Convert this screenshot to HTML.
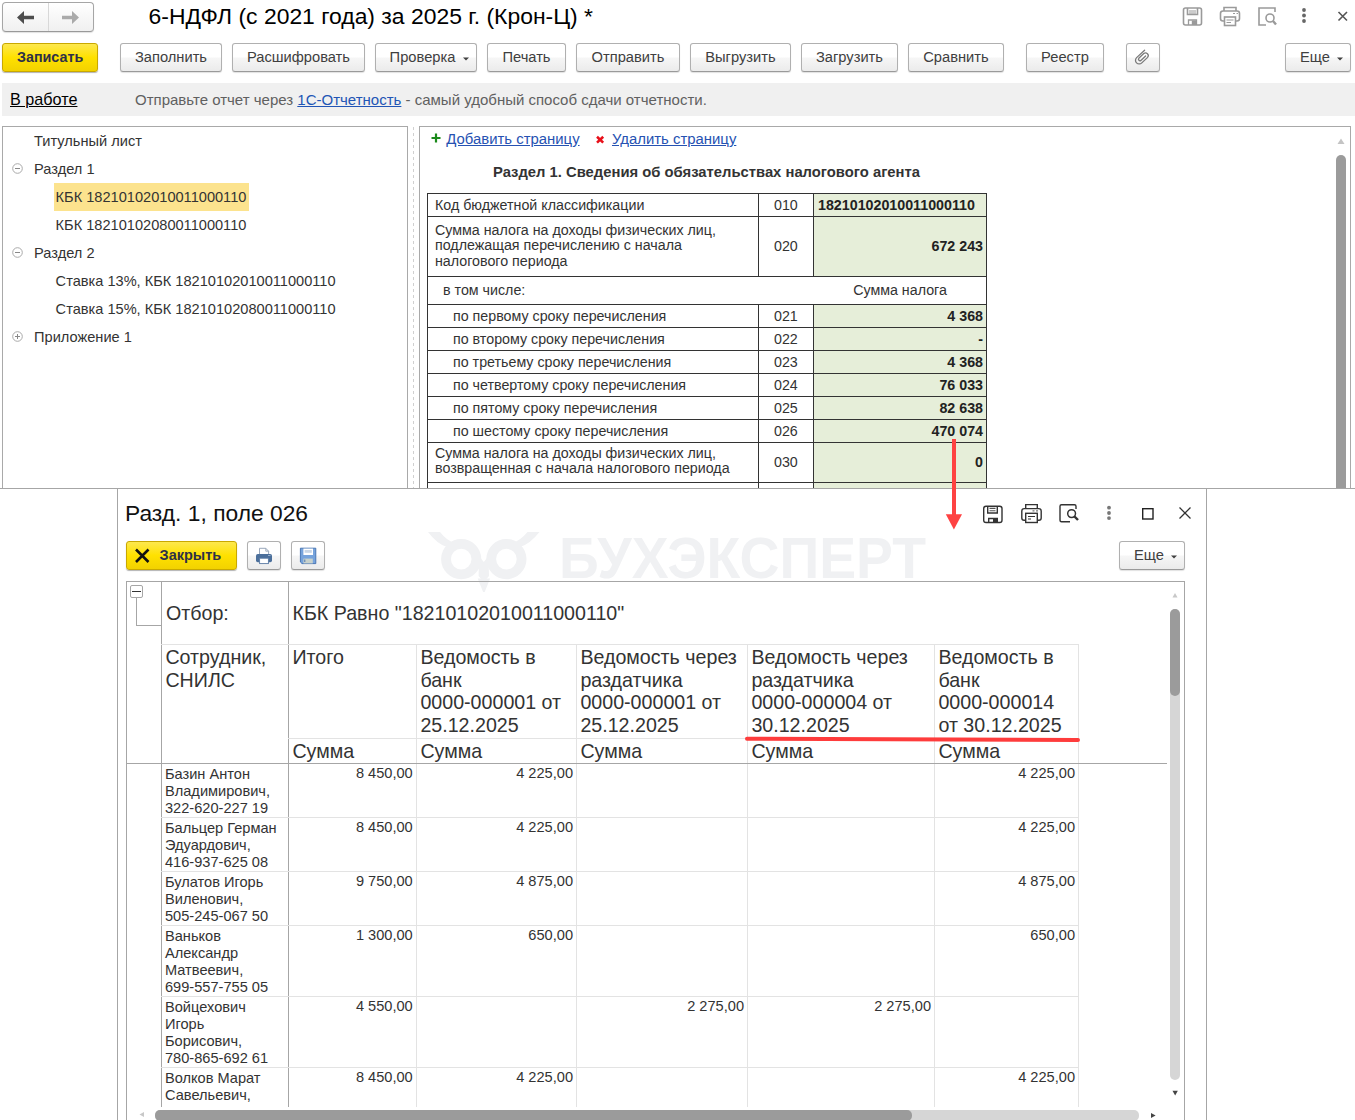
<!DOCTYPE html><html><head><meta charset="utf-8"><title>6-НДФЛ</title><style>
*{margin:0;padding:0;box-sizing:border-box}
html,body{width:1355px;height:1120px;overflow:hidden;background:#fff;font-family:"Liberation Sans",sans-serif;}
.a,.t{position:absolute}
.t{white-space:pre}
.btn{position:absolute;border:1px solid #b0b0b0;border-bottom-color:#9a9a9a;border-radius:3px;background:linear-gradient(#ffffff 48%,#f6f6f6 52%,#ebebeb);box-shadow:0 1px 1px rgba(0,0,0,.12);}
.ybtn{position:absolute;border:1px solid #c9a800;border-radius:3px;background:linear-gradient(#fde84e,#ffe100 50%,#f2d200);box-shadow:0 1px 1px rgba(0,0,0,.3);}
.u{text-decoration:underline;}
</style></head><body>
<div class="btn" style="left:2px;top:2px;width:92px;height:30px;border-radius:4px;border-color:#a6a6a6;border-bottom-color:#999;background:linear-gradient(#fff,#f0f0f0)"></div>
<div class="a" style="left:48px;top:3px;width:1px;height:28px;background:#d8d8d8"></div>
<svg class="a" style="left:0;top:0" width="100" height="36"><path d="M17 17.5 L24 11 V15.8 H34 V19.2 H24 V24 Z" fill="#4d4d4d"/><path d="M79 17.5 L72 11 V15.8 H62 V19.2 H72 V24 Z" fill="#aaaaaa"/></svg>
<div class="t " style="left:148.60px;top:2.63px;font-size:22.9px;line-height:27.479999999999997px;color:#000;font-weight:normal;">6-НДФЛ (с 2021 года) за 2025 г. (Крон-Ц) *</div>
<svg class="a" style="left:1175px;top:0" width="180" height="36" fill="none" stroke="#9a9a9a" stroke-width="1.6">
<rect x="8.5" y="8" width="18" height="17" rx="2"/>
<path d="M12.5 8 V14.5 H22.5 V8" /><path d="M14 11 H21 M14 13 H21" stroke-width="1"/>
<path d="M13.5 25 V20 H21.5 V25" stroke-width="1.3"/><rect x="16.8" y="20.5" width="4.5" height="4.5" fill="#9a9a9a" stroke="none"/>
<path d="M49 11 V7.5 H61 V11" /><rect x="45.5" y="11" width="19" height="10" rx="2.5"/><rect x="49.5" y="17" width="11" height="8.5" fill="#fff"/><path d="M51.5 20 H58.5 M51.5 22.5 H56" stroke-width="1"/><path d="M58 13.5 H60 M61.5 13.5 H63" stroke-width="1"/>
<path d="M91 25 H84 V8 H100 V12"/><circle cx="95" cy="18" r="4"/><path d="M98 21 L101 24.5" stroke-width="2.4"/>
<circle cx="129" cy="10" r="1.9" fill="#666" stroke="none"/><circle cx="129" cy="15.5" r="1.9" fill="#666" stroke="none"/><circle cx="129" cy="21" r="1.9" fill="#666" stroke="none"/>
<path d="M163.5 12 L172 20.5 M172 12 L163.5 20.5" stroke="#555" stroke-width="1.6"/>
</svg>
<div class="ybtn" style="left:2px;top:43px;width:96px;height:29px;"></div>
<div class="t " style="left:17.00px;top:48.97px;font-size:14.3px;line-height:17.16px;color:#2e3048;font-weight:bold;">Записать</div>
<div class="btn" style="left:120px;top:43px;width:102px;height:29px;"></div>
<div class="t " style="left:134.92px;top:49.19px;font-size:14.7px;line-height:17.639999999999997px;color:#404040;font-weight:normal;">Заполнить</div>
<div class="btn" style="left:232px;top:43px;width:133px;height:29px;"></div>
<div class="t " style="left:246.91px;top:49.19px;font-size:14.7px;line-height:17.639999999999997px;color:#404040;font-weight:normal;">Расшифровать</div>
<div class="btn" style="left:375px;top:43px;width:102px;height:29px;"></div>
<div class="t " style="left:389.60px;top:49.19px;font-size:14.7px;line-height:17.639999999999997px;color:#404040;font-weight:normal;">Проверка</div>
<svg class="a" style="left:463px;top:57px" width="6" height="4"><path d="M0 0.5 H6 L3 3.5 Z" fill="#404040"/></svg>
<div class="btn" style="left:487px;top:43px;width:79px;height:29px;"></div>
<div class="t " style="left:502.42px;top:49.19px;font-size:14.7px;line-height:17.639999999999997px;color:#404040;font-weight:normal;">Печать</div>
<div class="btn" style="left:576px;top:43px;width:104px;height:29px;"></div>
<div class="t " style="left:591.56px;top:49.19px;font-size:14.7px;line-height:17.639999999999997px;color:#404040;font-weight:normal;">Отправить</div>
<div class="btn" style="left:690px;top:43px;width:101px;height:29px;"></div>
<div class="t " style="left:705.28px;top:49.19px;font-size:14.7px;line-height:17.639999999999997px;color:#404040;font-weight:normal;">Выгрузить</div>
<div class="btn" style="left:801px;top:43px;width:97px;height:29px;"></div>
<div class="t " style="left:815.94px;top:49.19px;font-size:14.7px;line-height:17.639999999999997px;color:#404040;font-weight:normal;">Загрузить</div>
<div class="btn" style="left:908px;top:43px;width:96px;height:29px;"></div>
<div class="t " style="left:923.25px;top:49.19px;font-size:14.7px;line-height:17.639999999999997px;color:#404040;font-weight:normal;">Сравнить</div>
<div class="btn" style="left:1026px;top:43px;width:78px;height:29px;"></div>
<div class="t " style="left:1041.12px;top:49.19px;font-size:14.7px;line-height:17.639999999999997px;color:#404040;font-weight:normal;">Реестр</div>
<div class="btn" style="left:1126px;top:43px;width:34px;height:29px;"></div>
<svg class="a" style="left:1126px;top:43px" width="34" height="30"><path d="M18.6 7.3 L10.6 14.6 A3.7 3.7 0 0 0 15.8 19.9 L21.6 14.4 A2.7 2.7 0 0 0 17.8 10.6 L12.8 15.3 A1.5 1.5 0 0 0 14.9 17.4 L19.6 13" fill="none" stroke="#7a7a7a" stroke-width="1.3" stroke-linecap="round"/></svg>
<div class="btn" style="left:1285px;top:43px;width:66px;height:29px;"></div>
<div class="t " style="left:1300.00px;top:49.19px;font-size:14.7px;line-height:17.639999999999997px;color:#404040;font-weight:normal;">Еще</div>
<svg class="a" style="left:1337px;top:57px" width="6" height="4"><path d="M0 0.5 H6 L3 3.5 Z" fill="#404040"/></svg>
<div class="a" style="left:2px;top:83px;width:1353px;height:33px;background:#f0f0f0"></div>
<div class="t " style="left:10.00px;top:89.57px;font-size:16.2px;line-height:19.439999999999998px;color:#000;font-weight:normal;"><span class="u">В работе</span></div>
<div class="t " style="left:135.00px;top:91.20px;font-size:15px;line-height:18.0px;color:#606060;font-weight:normal;">Отправьте отчет через <span class="u" style="color:#2255b5">1С-Отчетность</span> - самый удобный способ сдачи отчетности.</div>
<div class="a" style="left:2px;top:126px;width:406px;height:400px;border:1px solid #a9a9a9;border-bottom:none"></div>
<div class="a" style="left:413px;top:127px;width:1px;height:361px;background:repeating-linear-gradient(#d0d0d0 0 3px,transparent 3px 6px)"></div>
<div class="a" style="left:54px;top:183px;width:195px;height:28px;background:#fce38e"></div>
<div class="t " style="left:34.10px;top:132.58px;font-size:14.6px;line-height:17.52px;color:#333;font-weight:normal;">Титульный лист</div>
<div class="t " style="left:34.10px;top:160.68px;font-size:14.6px;line-height:17.52px;color:#333;font-weight:normal;">Раздел 1</div>
<svg class="a" style="left:11px;top:162.0px" width="13" height="13"><circle cx="6.5" cy="6.5" r="4.8" fill="none" stroke="#aaa" stroke-width="1"/><path d="M4 6.5 H9" stroke="#888" stroke-width="1"/></svg>
<div class="t " style="left:55.60px;top:188.78px;font-size:14.6px;line-height:17.52px;color:#333;font-weight:normal;">КБК 18210102010011000110</div>
<div class="t " style="left:55.60px;top:216.58px;font-size:14.6px;line-height:17.52px;color:#333;font-weight:normal;">КБК 18210102080011000110</div>
<div class="t " style="left:34.10px;top:244.68px;font-size:14.6px;line-height:17.52px;color:#333;font-weight:normal;">Раздел 2</div>
<svg class="a" style="left:11px;top:246.0px" width="13" height="13"><circle cx="6.5" cy="6.5" r="4.8" fill="none" stroke="#aaa" stroke-width="1"/><path d="M4 6.5 H9" stroke="#888" stroke-width="1"/></svg>
<div class="t " style="left:55.60px;top:272.68px;font-size:14.6px;line-height:17.52px;color:#333;font-weight:normal;">Ставка 13%, КБК 18210102010011000110</div>
<div class="t " style="left:55.60px;top:300.68px;font-size:14.6px;line-height:17.52px;color:#333;font-weight:normal;">Ставка 15%, КБК 18210102080011000110</div>
<div class="t " style="left:34.10px;top:328.68px;font-size:14.6px;line-height:17.52px;color:#333;font-weight:normal;">Приложение 1</div>
<svg class="a" style="left:11px;top:330.0px" width="13" height="13"><circle cx="6.5" cy="6.5" r="4.8" fill="none" stroke="#aaa" stroke-width="1"/><path d="M4 6.5 H9" stroke="#888" stroke-width="1"/><path d="M6.5 4 V9" stroke="#888" stroke-width="1"/></svg>
<div class="a" style="left:419px;top:126px;width:932px;height:400px;border:1px solid #a9a9a9;border-bottom:none"></div>
<svg class="a" style="left:1336px;top:136px" width="12" height="10"><path d="M1.5 8 L5 2.5 L8.5 8 Z" fill="#c4c4c4"/></svg>
<div class="a" style="left:1336px;top:155px;width:10px;height:340px;background:#9b9b9b;border-radius:5px"></div>
<svg class="a" style="left:431px;top:133px" width="10" height="10"><path d="M5 0.5 V9.5 M0.5 5 H9.5" stroke="#1a8a1a" stroke-width="2.2"/></svg>
<div class="t " style="left:446.30px;top:130.50px;font-size:14.9px;line-height:17.88px;color:#2652b2;font-weight:normal;"><span class="u">Добавить страницу</span></div>
<svg class="a" style="left:595px;top:134px" width="10" height="10"><path d="M2 2.8 L8.2 8.6 M8.2 2.8 L2 8.6" stroke="#e8101a" stroke-width="2.6"/></svg>
<div class="t " style="left:612.00px;top:130.50px;font-size:14.9px;line-height:17.88px;color:#2652b2;font-weight:normal;"><span class="u">Удалить страницу</span></div>
<div class="t " style="left:493.00px;top:163.69px;font-size:14.8px;line-height:17.76px;color:#333;font-weight:bold;">Раздел 1. Сведения об обязательствах налогового агента</div>
<div class="a" style="left:814px;top:194px;width:172px;height:22px;background:#e6eed9"></div>
<div class="a" style="left:814px;top:217px;width:172px;height:59px;background:#e6eed9"></div>
<div class="a" style="left:814px;top:305px;width:172px;height:22px;background:#e6eed9"></div>
<div class="a" style="left:814px;top:328px;width:172px;height:22px;background:#e6eed9"></div>
<div class="a" style="left:814px;top:351px;width:172px;height:22px;background:#e6eed9"></div>
<div class="a" style="left:814px;top:374px;width:172px;height:22px;background:#e6eed9"></div>
<div class="a" style="left:814px;top:397px;width:172px;height:22px;background:#e6eed9"></div>
<div class="a" style="left:814px;top:420px;width:172px;height:22px;background:#e6eed9"></div>
<div class="a" style="left:814px;top:443px;width:172px;height:39px;background:#e6eed9"></div>
<div class="a" style="left:814px;top:483px;width:172px;height:6px;background:#e6eed9"></div>
<div class="a" style="left:427px;top:193px;width:560px;height:1px;background:#333"></div>
<div class="a" style="left:427px;top:216px;width:560px;height:1px;background:#333"></div>
<div class="a" style="left:427px;top:276px;width:560px;height:1px;background:#333"></div>
<div class="a" style="left:427px;top:304px;width:560px;height:1px;background:#333"></div>
<div class="a" style="left:427px;top:327px;width:560px;height:1px;background:#333"></div>
<div class="a" style="left:427px;top:350px;width:560px;height:1px;background:#333"></div>
<div class="a" style="left:427px;top:373px;width:560px;height:1px;background:#333"></div>
<div class="a" style="left:427px;top:396px;width:560px;height:1px;background:#333"></div>
<div class="a" style="left:427px;top:419px;width:560px;height:1px;background:#333"></div>
<div class="a" style="left:427px;top:442px;width:560px;height:1px;background:#333"></div>
<div class="a" style="left:427px;top:482px;width:560px;height:1px;background:#333"></div>
<div class="a" style="left:427px;top:193px;width:1px;height:300px;background:#333"></div>
<div class="a" style="left:986px;top:193px;width:1px;height:300px;background:#333"></div>
<div class="a" style="left:758px;top:193px;width:1px;height:23px;background:#333"></div>
<div class="a" style="left:813px;top:193px;width:1px;height:23px;background:#333"></div>
<div class="a" style="left:758px;top:216px;width:1px;height:60px;background:#333"></div>
<div class="a" style="left:813px;top:216px;width:1px;height:60px;background:#333"></div>
<div class="a" style="left:758px;top:304px;width:1px;height:23px;background:#333"></div>
<div class="a" style="left:813px;top:304px;width:1px;height:23px;background:#333"></div>
<div class="a" style="left:758px;top:327px;width:1px;height:23px;background:#333"></div>
<div class="a" style="left:813px;top:327px;width:1px;height:23px;background:#333"></div>
<div class="a" style="left:758px;top:350px;width:1px;height:23px;background:#333"></div>
<div class="a" style="left:813px;top:350px;width:1px;height:23px;background:#333"></div>
<div class="a" style="left:758px;top:373px;width:1px;height:23px;background:#333"></div>
<div class="a" style="left:813px;top:373px;width:1px;height:23px;background:#333"></div>
<div class="a" style="left:758px;top:396px;width:1px;height:23px;background:#333"></div>
<div class="a" style="left:813px;top:396px;width:1px;height:23px;background:#333"></div>
<div class="a" style="left:758px;top:419px;width:1px;height:23px;background:#333"></div>
<div class="a" style="left:813px;top:419px;width:1px;height:23px;background:#333"></div>
<div class="a" style="left:758px;top:442px;width:1px;height:40px;background:#333"></div>
<div class="a" style="left:813px;top:442px;width:1px;height:40px;background:#333"></div>
<div class="a" style="left:758px;top:482px;width:1px;height:10px;background:#333"></div>
<div class="a" style="left:813px;top:482px;width:1px;height:10px;background:#333"></div>
<div class="t " style="left:435.00px;top:197.01px;font-size:14.25px;line-height:17.099999999999998px;color:#333;font-weight:normal;">Код бюджетной классификации</div>
<div class="t " style="left:774.00px;top:197.01px;font-size:14.25px;line-height:17.099999999999998px;color:#333;font-weight:normal;">010</div>
<div class="t " style="left:818.00px;top:197.01px;font-size:14.25px;line-height:17.099999999999998px;color:#222;font-weight:bold;">18210102010011000110</div>
<div class="t " style="left:435.00px;top:222.81px;font-size:14.25px;line-height:15.5px;color:#333;font-weight:normal;">Сумма налога на доходы физических лиц,
подлежащая перечислению с начала
налогового периода</div>
<div class="t " style="left:774.00px;top:237.51px;font-size:14.25px;line-height:17.099999999999998px;color:#333;font-weight:normal;">020</div>
<div class="t " style="left:983.00px;top:237.51px;font-size:14.25px;line-height:17.099999999999998px;color:#222;font-weight:bold;transform:translateX(-100%)">672 243</div>
<div class="t " style="left:443.00px;top:281.81px;font-size:14.25px;line-height:17.099999999999998px;color:#333;font-weight:normal;">в том числе:</div>
<div class="t " style="left:900.00px;top:281.51px;font-size:14.25px;line-height:17.099999999999998px;color:#333;font-weight:normal;transform:translateX(-50%)">Сумма налога</div>
<div class="t " style="left:453.00px;top:307.71px;font-size:14.25px;line-height:17.099999999999998px;color:#333;font-weight:normal;">по первому сроку перечисления</div>
<div class="t " style="left:774.00px;top:307.71px;font-size:14.25px;line-height:17.099999999999998px;color:#333;font-weight:normal;">021</div>
<div class="t " style="left:983.00px;top:307.71px;font-size:14.25px;line-height:17.099999999999998px;color:#222;font-weight:bold;transform:translateX(-100%)">4 368</div>
<div class="t " style="left:453.00px;top:330.71px;font-size:14.25px;line-height:17.099999999999998px;color:#333;font-weight:normal;">по второму сроку перечисления</div>
<div class="t " style="left:774.00px;top:330.71px;font-size:14.25px;line-height:17.099999999999998px;color:#333;font-weight:normal;">022</div>
<div class="t " style="left:983.00px;top:330.71px;font-size:14.25px;line-height:17.099999999999998px;color:#222;font-weight:bold;transform:translateX(-100%)">-</div>
<div class="t " style="left:453.00px;top:353.71px;font-size:14.25px;line-height:17.099999999999998px;color:#333;font-weight:normal;">по третьему сроку перечисления</div>
<div class="t " style="left:774.00px;top:353.71px;font-size:14.25px;line-height:17.099999999999998px;color:#333;font-weight:normal;">023</div>
<div class="t " style="left:983.00px;top:353.71px;font-size:14.25px;line-height:17.099999999999998px;color:#222;font-weight:bold;transform:translateX(-100%)">4 368</div>
<div class="t " style="left:453.00px;top:376.71px;font-size:14.25px;line-height:17.099999999999998px;color:#333;font-weight:normal;">по четвертому сроку перечисления</div>
<div class="t " style="left:774.00px;top:376.71px;font-size:14.25px;line-height:17.099999999999998px;color:#333;font-weight:normal;">024</div>
<div class="t " style="left:983.00px;top:376.71px;font-size:14.25px;line-height:17.099999999999998px;color:#222;font-weight:bold;transform:translateX(-100%)">76 033</div>
<div class="t " style="left:453.00px;top:399.71px;font-size:14.25px;line-height:17.099999999999998px;color:#333;font-weight:normal;">по пятому сроку перечисления</div>
<div class="t " style="left:774.00px;top:399.71px;font-size:14.25px;line-height:17.099999999999998px;color:#333;font-weight:normal;">025</div>
<div class="t " style="left:983.00px;top:399.71px;font-size:14.25px;line-height:17.099999999999998px;color:#222;font-weight:bold;transform:translateX(-100%)">82 638</div>
<div class="t " style="left:453.00px;top:422.71px;font-size:14.25px;line-height:17.099999999999998px;color:#333;font-weight:normal;">по шестому сроку перечисления</div>
<div class="t " style="left:774.00px;top:422.71px;font-size:14.25px;line-height:17.099999999999998px;color:#333;font-weight:normal;">026</div>
<div class="t " style="left:983.00px;top:422.71px;font-size:14.25px;line-height:17.099999999999998px;color:#222;font-weight:bold;transform:translateX(-100%)">470 074</div>
<div class="t " style="left:435.00px;top:446.16px;font-size:14.25px;line-height:15px;color:#333;font-weight:normal;">Сумма налога на доходы физических лиц,
возвращенная с начала налогового периода</div>
<div class="t " style="left:774.00px;top:453.71px;font-size:14.25px;line-height:17.099999999999998px;color:#333;font-weight:normal;">030</div>
<div class="t " style="left:983.00px;top:453.71px;font-size:14.25px;line-height:17.099999999999998px;color:#222;font-weight:bold;transform:translateX(-100%)">0</div>
<div class="a" style="left:0px;top:488px;width:1355px;height:632px;background:#fff"></div>
<div class="a" style="left:0px;top:488px;width:1355px;height:1px;background:#a6a6a6"></div>
<div class="a" style="left:117px;top:488px;width:1px;height:632px;background:#a6a6a6"></div>
<div class="a" style="left:1206px;top:488px;width:1px;height:632px;background:#a6a6a6"></div>
<div class="t " style="left:125.00px;top:500.42px;font-size:22.8px;line-height:27.36px;color:#111;font-weight:normal;">Разд. 1, поле 026</div>
<svg class="a" style="left:975px;top:498px" width="225" height="32" fill="none" stroke="#333" stroke-width="1.4">
<rect x="8.7" y="8.2" width="18.3" height="16.3" rx="2.3"/>
<path d="M12.7 8.2 V15 H22.3 V8.2"/><path d="M14.5 10.4 H20.5 M14.5 12.8 H20.5" stroke-width="1.1" stroke="#555"/>
<path d="M13.7 24.5 V20.5 H22.3 V24.5"/><rect x="18" y="21" width="4" height="3.5" fill="#333" stroke="none"/>
<path d="M50.7 10.5 V6.6 H62.3 V10.5"/><rect x="46.8" y="10.6" width="19.4" height="11.6" rx="2.3"/>
<rect x="50.7" y="15.3" width="11.6" height="9.2" fill="#fff"/>
<path d="M53 18.5 H60 M53 21 H56" stroke-width="1.1"/><path d="M57.5 12.9 H59.5 M61 12.9 H63" stroke-width="1.1" stroke="#777"/>
<path d="M95 23.7 H86.5 a1.5 1.5 0 0 1 -1.5 -1.5 V8.3 a1.5 1.5 0 0 1 1.5 -1.5 H99.5 a1.5 1.5 0 0 1 1.5 1.5 V11"/>
<circle cx="96.6" cy="15.6" r="3.9" stroke-width="1.5"/><path d="M99.5 18.5 L103 22" stroke-width="2.4"/>
<circle cx="134" cy="9.7" r="1.9" fill="#777" stroke="none"/><circle cx="134" cy="15" r="1.9" fill="#777" stroke="none"/><circle cx="134" cy="20.1" r="1.9" fill="#777" stroke="none"/>
<rect x="167.7" y="10.7" width="10.3" height="10.3" stroke="#222" stroke-width="1.4"/>
<path d="M204.5 9.5 L215.5 20.5 M215.5 9.5 L204.5 20.5" stroke="#333" stroke-width="1.3"/>
</svg>
<div class="t" style="left:559px;top:529.3px;font-size:58px;line-height:58px;font-weight:bold;color:#f0f1f3;transform:scaleX(0.953);transform-origin:0 0">БУХЭКСПЕРТ</div>
<svg class="a" style="left:425px;top:532px" width="120" height="60">
<g fill="none" stroke="#f0f1f3" stroke-width="9.8"><circle cx="36.2" cy="27.1" r="15.2"/><circle cx="81.4" cy="27.1" r="15.2"/></g>
<path d="M3 0 Q12 12 22 15 L30 11 Q22 9 15 0 Z" fill="#f0f1f3"/>
<path d="M114.5 0 Q105 12 95 15 L87 11 Q95 9 102.5 0 Z" fill="#f0f1f3"/>
<path d="M52.7 46.5 L65.1 46.5 L58.9 62 Z" fill="#f0f1f3"/>
<path d="M54 24 L58.8 30 L63.5 24 L64 44 L58.8 50 L53.6 44 Z" fill="#f0f1f3"/>
</svg>
<div class="ybtn" style="left:126px;top:541px;width:111px;height:29px;"></div>
<svg class="a" style="left:130px;top:544px" width="24" height="24"><path d="M6 5.5 L18.5 18 M18.5 5.5 L6 18" stroke="#111" stroke-width="2.6"/></svg>
<div class="t " style="left:159.60px;top:546.68px;font-size:14.5px;line-height:17.4px;color:#2e3048;font-weight:bold;">Закрыть</div>
<div class="btn" style="left:247px;top:541px;width:34px;height:29px;"></div>
<div class="btn" style="left:291px;top:541px;width:34px;height:29px;"></div>
<svg class="a" style="left:247px;top:541px" width="34" height="30">
<path d="M12.5 13 V7.3 H18.8 L21.6 10.2 V13" fill="#fff" stroke="#8d9db3" stroke-width="0.9"/>
<path d="M18.8 7.3 V10.2 H21.6" fill="none" stroke="#8d9db3" stroke-width="0.8"/>
<rect x="9" y="13" width="16" height="8.3" rx="1.8" fill="#4b6f9b"/>
<path d="M21 14.5 H23.5" stroke="#9fb4cf" stroke-width="0.9"/>
<rect x="12.6" y="17.2" width="8.8" height="5.4" fill="#fff" stroke="#5a7aa3" stroke-width="0.9"/>
</svg>
<svg class="a" style="left:291px;top:541px" width="34" height="30">
<path d="M9.4 7.2 H24.8 V22.6 H11 L9.4 21 Z" fill="#76a3dc" stroke="#3f6eae" stroke-width="0.9"/>
<rect x="12.4" y="7.6" width="9.6" height="6.4" fill="#fff"/>
<rect x="13.6" y="9" width="7.2" height="2.8" fill="#c9d6e6"/>
<rect x="12.4" y="17.6" width="9.4" height="4.8" fill="#c9d2cc"/>
<path d="M13.8 18.5 V21" stroke="#3f6eae" stroke-width="0.9"/>
</svg>
<div class="btn" style="left:1119px;top:541px;width:66px;height:29px;"></div>
<div class="t " style="left:1134.00px;top:547.19px;font-size:14.7px;line-height:17.639999999999997px;color:#404040;font-weight:normal;">Еще</div>
<svg class="a" style="left:1171px;top:555px" width="6" height="4"><path d="M0 0.5 H6 L3 3.5 Z" fill="#404040"/></svg>
<div class="a" style="left:126px;top:581px;width:1059px;height:1px;background:#a6a6a6"></div>
<div class="a" style="left:126px;top:581px;width:1px;height:540px;background:#a6a6a6"></div>
<div class="a" style="left:1184px;top:581px;width:1px;height:540px;background:#a6a6a6"></div>
<div class="a" style="left:161px;top:581px;width:1px;height:526px;background:#a6a6a6"></div>
<div class="a" style="left:288px;top:581px;width:1px;height:526px;background:#a6a6a6"></div>
<div class="a" style="left:130px;top:585px;width:13px;height:13px;background:#fff;border:1px solid #a6a6a6;border-radius:2px"></div>
<div class="a" style="left:132px;top:591px;width:9px;height:1px;background:#333"></div>
<div class="a" style="left:136px;top:598px;width:1px;height:28px;background:#a6a6a6"></div>
<div class="a" style="left:136px;top:625px;width:25px;height:1px;background:#a6a6a6"></div>
<div class="a" style="left:416px;top:644px;width:1px;height:463px;background:#e3e3e3"></div>
<div class="a" style="left:576px;top:644px;width:1px;height:463px;background:#e3e3e3"></div>
<div class="a" style="left:747px;top:644px;width:1px;height:463px;background:#e3e3e3"></div>
<div class="a" style="left:934px;top:644px;width:1px;height:463px;background:#e3e3e3"></div>
<div class="a" style="left:1078px;top:644px;width:1px;height:463px;background:#e3e3e3"></div>
<div class="a" style="left:161px;top:644px;width:918px;height:1px;background:#e3e3e3"></div>
<div class="a" style="left:288px;top:738px;width:791px;height:1px;background:#e3e3e3"></div>
<div class="a" style="left:126px;top:763px;width:1041px;height:1px;background:#a6a6a6"></div>
<div class="a" style="left:161px;top:817px;width:918px;height:1px;background:#e3e3e3"></div>
<div class="a" style="left:161px;top:871px;width:918px;height:1px;background:#e3e3e3"></div>
<div class="a" style="left:161px;top:925px;width:918px;height:1px;background:#e3e3e3"></div>
<div class="a" style="left:161px;top:996px;width:918px;height:1px;background:#e3e3e3"></div>
<div class="a" style="left:161px;top:1067px;width:918px;height:1px;background:#e3e3e3"></div>
<div class="t " style="left:166.00px;top:601.80px;font-size:19.65px;line-height:23.58px;color:#333;font-weight:normal;">Отбор:</div>
<div class="t " style="left:292.50px;top:601.80px;font-size:19.65px;line-height:23.58px;color:#333;font-weight:normal;">КБК Равно "18210102010011000110"</div>
<div class="t " style="left:165.40px;top:645.79px;font-size:19.65px;line-height:22.8px;color:#333;font-weight:normal;">Сотрудник,
СНИЛС</div>
<div class="t " style="left:292.40px;top:645.79px;font-size:19.65px;line-height:22.8px;color:#333;font-weight:normal;">Итого</div>
<div class="t " style="left:420.40px;top:645.79px;font-size:19.65px;line-height:22.8px;color:#333;font-weight:normal;">Ведомость в
банк
0000-000001 от
25.12.2025</div>
<div class="t " style="left:580.40px;top:645.79px;font-size:19.65px;line-height:22.8px;color:#333;font-weight:normal;">Ведомость через
раздатчика
0000-000001 от
25.12.2025</div>
<div class="t " style="left:751.40px;top:645.79px;font-size:19.65px;line-height:22.8px;color:#333;font-weight:normal;">Ведомость через
раздатчика
0000-000004 от
30.12.2025</div>
<div class="t " style="left:938.40px;top:645.79px;font-size:19.65px;line-height:22.8px;color:#333;font-weight:normal;">Ведомость в
банк
0000-000014
от 30.12.2025</div>
<div class="t " style="left:292.40px;top:739.80px;font-size:19.65px;line-height:23.58px;color:#333;font-weight:normal;">Сумма</div>
<div class="t " style="left:420.40px;top:739.80px;font-size:19.65px;line-height:23.58px;color:#333;font-weight:normal;">Сумма</div>
<div class="t " style="left:580.40px;top:739.80px;font-size:19.65px;line-height:23.58px;color:#333;font-weight:normal;">Сумма</div>
<div class="t " style="left:751.40px;top:739.80px;font-size:19.65px;line-height:23.58px;color:#333;font-weight:normal;">Сумма</div>
<div class="t " style="left:938.40px;top:739.80px;font-size:19.65px;line-height:23.58px;color:#333;font-weight:normal;">Сумма</div>
<div class="a" style="left:0;top:0;width:1355px;height:1107px;overflow:hidden">
<div class="t " style="left:165.00px;top:765.74px;font-size:14.6px;line-height:17px;color:#333;font-weight:normal;">Базин Антон
Владимирович,
322-620-227 19</div>
<div class="t " style="left:412.70px;top:765.48px;font-size:14.6px;line-height:17.52px;color:#333;font-weight:normal;transform:translateX(-100%)">8 450,00</div>
<div class="t " style="left:573.00px;top:765.48px;font-size:14.6px;line-height:17.52px;color:#333;font-weight:normal;transform:translateX(-100%)">4 225,00</div>
<div class="t " style="left:1075.00px;top:765.48px;font-size:14.6px;line-height:17.52px;color:#333;font-weight:normal;transform:translateX(-100%)">4 225,00</div>
<div class="t " style="left:165.00px;top:819.74px;font-size:14.6px;line-height:17px;color:#333;font-weight:normal;">Бальцер Герман
Эдуардович,
416-937-625 08</div>
<div class="t " style="left:412.70px;top:819.48px;font-size:14.6px;line-height:17.52px;color:#333;font-weight:normal;transform:translateX(-100%)">8 450,00</div>
<div class="t " style="left:573.00px;top:819.48px;font-size:14.6px;line-height:17.52px;color:#333;font-weight:normal;transform:translateX(-100%)">4 225,00</div>
<div class="t " style="left:1075.00px;top:819.48px;font-size:14.6px;line-height:17.52px;color:#333;font-weight:normal;transform:translateX(-100%)">4 225,00</div>
<div class="t " style="left:165.00px;top:873.74px;font-size:14.6px;line-height:17px;color:#333;font-weight:normal;">Булатов Игорь
Виленович,
505-245-067 50</div>
<div class="t " style="left:412.70px;top:873.48px;font-size:14.6px;line-height:17.52px;color:#333;font-weight:normal;transform:translateX(-100%)">9 750,00</div>
<div class="t " style="left:573.00px;top:873.48px;font-size:14.6px;line-height:17.52px;color:#333;font-weight:normal;transform:translateX(-100%)">4 875,00</div>
<div class="t " style="left:1075.00px;top:873.48px;font-size:14.6px;line-height:17.52px;color:#333;font-weight:normal;transform:translateX(-100%)">4 875,00</div>
<div class="t " style="left:165.00px;top:927.74px;font-size:14.6px;line-height:17px;color:#333;font-weight:normal;">Ваньков
Александр
Матвеевич,
699-557-755 05</div>
<div class="t " style="left:412.70px;top:927.48px;font-size:14.6px;line-height:17.52px;color:#333;font-weight:normal;transform:translateX(-100%)">1 300,00</div>
<div class="t " style="left:573.00px;top:927.48px;font-size:14.6px;line-height:17.52px;color:#333;font-weight:normal;transform:translateX(-100%)">650,00</div>
<div class="t " style="left:1075.00px;top:927.48px;font-size:14.6px;line-height:17.52px;color:#333;font-weight:normal;transform:translateX(-100%)">650,00</div>
<div class="t " style="left:165.00px;top:998.74px;font-size:14.6px;line-height:17px;color:#333;font-weight:normal;">Войцехович
Игорь
Борисович,
780-865-692 61</div>
<div class="t " style="left:412.70px;top:998.48px;font-size:14.6px;line-height:17.52px;color:#333;font-weight:normal;transform:translateX(-100%)">4 550,00</div>
<div class="t " style="left:744.00px;top:998.48px;font-size:14.6px;line-height:17.52px;color:#333;font-weight:normal;transform:translateX(-100%)">2 275,00</div>
<div class="t " style="left:931.00px;top:998.48px;font-size:14.6px;line-height:17.52px;color:#333;font-weight:normal;transform:translateX(-100%)">2 275,00</div>
<div class="t " style="left:165.00px;top:1069.74px;font-size:14.6px;line-height:17px;color:#333;font-weight:normal;">Волков Марат
Савельевич,
872-478-903 42</div>
<div class="t " style="left:412.70px;top:1069.48px;font-size:14.6px;line-height:17.52px;color:#333;font-weight:normal;transform:translateX(-100%)">8 450,00</div>
<div class="t " style="left:573.00px;top:1069.48px;font-size:14.6px;line-height:17.52px;color:#333;font-weight:normal;transform:translateX(-100%)">4 225,00</div>
<div class="t " style="left:1075.00px;top:1069.48px;font-size:14.6px;line-height:17.52px;color:#333;font-weight:normal;transform:translateX(-100%)">4 225,00</div>
</div>
<svg class="a" style="left:1169px;top:590px" width="12" height="10"><path d="M3.5 7.5 L6 3 L8.5 7.5 Z" fill="#c8c8c8"/></svg>
<div class="a" style="left:1170px;top:609px;width:10px;height:471px;background:#d6d6d6;border-radius:5px"></div>
<div class="a" style="left:1170px;top:609px;width:10px;height:87px;background:#9b9b9b;border-radius:5px"></div>
<svg class="a" style="left:1169px;top:1088px" width="12" height="10"><path d="M3.5 2.8 L8.8 2.8 L6.2 7.6 Z" fill="#444"/></svg>
<svg class="a" style="left:137px;top:1109px" width="10" height="12"><path d="M7 3 L2.5 5.5 L7 8 Z" fill="#c8c8c8"/></svg>
<div class="a" style="left:155px;top:1110px;width:984px;height:11px;background:#d6d6d6;border-radius:5px"></div>
<div class="a" style="left:155px;top:1110px;width:757px;height:11px;background:#9b9b9b;border-radius:5px"></div>
<svg class="a" style="left:1149px;top:1109px" width="10" height="12"><path d="M2 3.9 L6.6 6.4 L2 9 Z" fill="#444"/></svg>
<div class="a" style="left:952px;top:439px;width:4px;height:78px;background:#fe4242"></div>
<svg class="a" style="left:944px;top:512px" width="20" height="20"><path d="M1.8 2.3 L18 2.3 L9.9 17.5 Z" fill="#fe4242"/></svg>
<svg class="a" style="left:740px;top:732px" width="345" height="14"><path d="M7 6.8 Q170 7.2 338 8" stroke="#fe3c3c" stroke-width="4" stroke-linecap="round" fill="none"/></svg>
</body></html>
